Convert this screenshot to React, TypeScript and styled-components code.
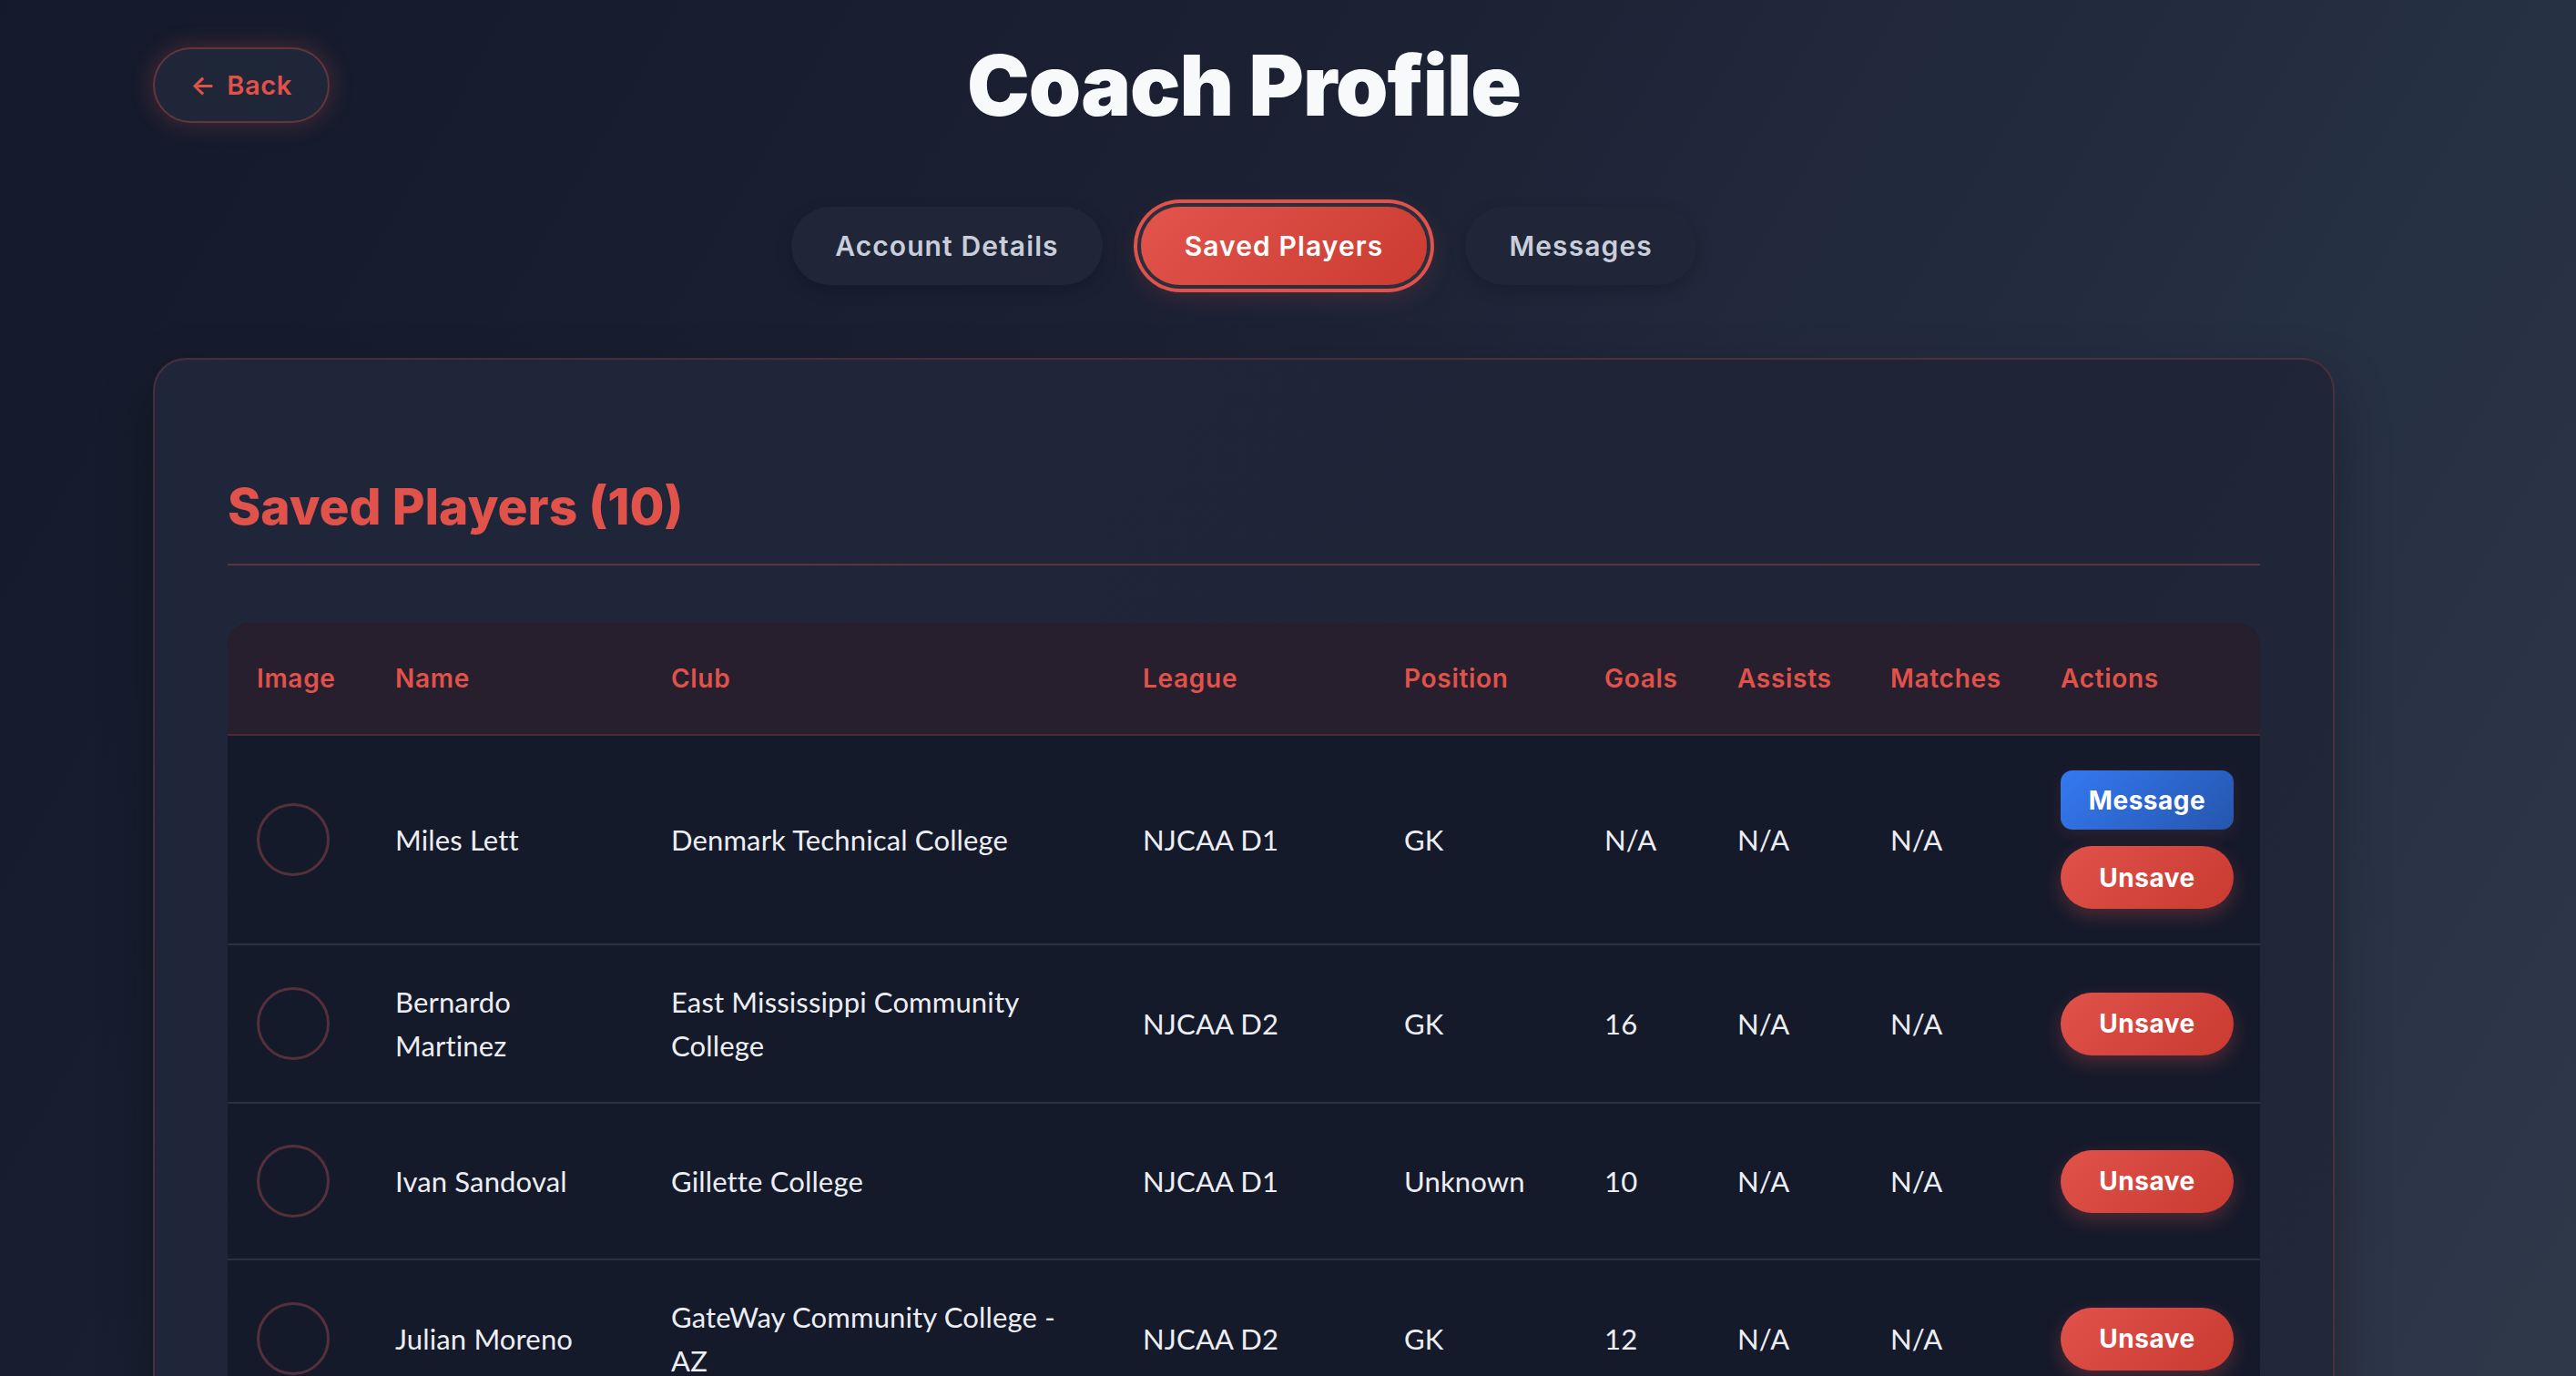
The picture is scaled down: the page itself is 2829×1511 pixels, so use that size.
import React from "react";
import styled, { createGlobalStyle } from "styled-components";

const GlobalStyle = createGlobalStyle`
  html, body {
    margin: 0;
    padding: 0;
  }
  body {
    min-height: 100vh;
    background: linear-gradient(120deg, #141a2b 0%, #1b2133 40%, #263043 75%, #2f3849 100%);
    background-attachment: fixed;
    font-family: "Lato", "Noto Sans", sans-serif;
    color: #e9ecf2;
  }
  #root {
    min-height: 100vh;
  }
`;

const Page = styled.div`
  width: 2396px;
  margin-left: 168px;
  padding-top: 52px;
  padding-bottom: 80px;
`;

const Header = styled.header`
  display: grid;
  grid-template-columns: 1fr auto 1fr;
  align-items: center;
  height: 83px;
`;

const BackButton = styled.button`
  justify-self: start;
  box-sizing: border-box;
  display: inline-flex;
  align-items: center;
  gap: 12px;
  height: 83px;
  padding: 0 39px;
  border-radius: 42px;
  border: 2px solid rgba(224, 82, 74, 0.35);
  background: #1f2637;
  color: #e0524a;
  font-family: "Inter", "Liberation Sans", sans-serif;
  font-size: 29px;
  font-weight: 600;
  letter-spacing: 0.6px;
  box-shadow: 0 0 26px rgba(224, 82, 74, 0.28);
  cursor: pointer;
`;

const Title = styled.h1`
  margin: 0;
  font-family: "Inter", "Liberation Sans", sans-serif;
  font-weight: 900;
  font-size: 92px;
  line-height: 83px;
  letter-spacing: -1px;
  color: #f8f9fb;
`;

const Tabs = styled.nav`
  display: flex;
  justify-content: center;
  gap: 42px;
  margin-top: 92px;
`;

const Tab = styled.button<{ $active?: boolean }>`
  box-sizing: border-box;
  height: 86px;
  padding: 0 48px;
  border-radius: 43px;
  border: none;
  font-family: "Inter", "Liberation Sans", sans-serif;
  font-size: 30px;
  font-weight: 600;
  letter-spacing: 1.1px;
  cursor: pointer;
  color: ${(p) => (p.$active ? "#ffffff" : "#c8cedb")};
  background: ${(p) =>
    p.$active ? "linear-gradient(135deg, #e2544c 0%, #cb3b32 100%)" : "#202637"};
  box-shadow: ${(p) =>
    p.$active
      ? "0 0 0 4px #2a2e3d, 0 0 0 8px #e0524a, 0 8px 30px rgba(224, 82, 74, 0.25)"
      : "0 6px 18px rgba(0, 0, 0, 0.18)"};
`;

const Card = styled.section`
  margin-top: 80px;
  padding: 128px 80px 80px;
  border-radius: 36px;
  border: 2px solid rgba(224, 82, 74, 0.22);
  background: linear-gradient(120deg, #20263a 0%, #1f2536 60%, #222a3b 100%);
  box-shadow: 0 24px 60px rgba(0, 0, 0, 0.3);
`;

const SectionTitle = styled.h2`
  margin: 0;
  padding-bottom: 30px;
  border-bottom: 2px solid rgba(224, 82, 74, 0.32);
  font-family: "Inter", "Liberation Sans", sans-serif;
  font-weight: 800;
  font-size: 55px;
  line-height: 66px;
  color: #e0524a;
`;

const TableWrap = styled.div`
  margin-top: 63px;
  border-radius: 25px;
  overflow: hidden;
  background: #151a2b;
`;

const Table = styled.table`
  width: 100%;
  border-collapse: collapse;
  table-layout: fixed;
`;

const HeadCell = styled.th`
  height: 122px;
  padding: 0 32px;
  text-align: left;
  background: #281f2e;
  border-bottom: 2px solid #4b2a35;
  color: #e0524a;
  font-family: "Inter", "Liberation Sans", sans-serif;
  font-size: 28px;
  font-weight: 600;
  letter-spacing: 0.7px;
`;

const Row = styled.tr`
  height: 172px;
  background: #151a2b;
  & + & td {
    border-top: 2px solid #2a3142;
  }
`;

const Cell = styled.td`
  padding: 38px 32px;
  vertical-align: middle;
  font-family: "Lato", "Noto Sans", sans-serif;
  font-size: 31px;
  line-height: 48px;
  letter-spacing: 0.15px;
  color: #eceef3;
`;

const Avatar = styled.div`
  width: 80px;
  height: 80px;
  border-radius: 50%;
  border: 3px solid #55303a;
  box-sizing: border-box;
`;

const Actions = styled.div`
  display: flex;
  flex-direction: column;
  gap: 18px;
  width: 190px;
`;

const ActionButton = styled.button<{ $variant: "message" | "unsave" }>`
  box-sizing: border-box;
  width: 100%;
  height: ${(p) => (p.$variant === "message" ? "65px" : "69px")};
  border: none;
  border-radius: ${(p) => (p.$variant === "message" ? "13px" : "35px")};
  color: #ffffff;
  font-family: "Inter", "Liberation Sans", sans-serif;
  font-size: 28px;
  font-weight: 700;
  letter-spacing: 0.5px;
  cursor: pointer;
  background: ${(p) =>
    p.$variant === "message"
      ? "linear-gradient(135deg, #3479f2 0%, #2556ad 100%)"
      : "linear-gradient(135deg, #e0524a 0%, #c93a31 100%)"};
  box-shadow: ${(p) =>
    p.$variant === "message"
      ? "0 6px 18px rgba(224, 82, 74, 0.12)"
      : "0 8px 20px rgba(224, 82, 74, 0.28)"};
`;

type Player = {
  name: string;
  club: string;
  league: string;
  position: string;
  goals: string;
  assists: string;
  matches: string;
  canMessage?: boolean;
};

const players: Player[] = [
  { name: "Miles Lett", club: "Denmark Technical College", league: "NJCAA D1", position: "GK", goals: "N/A", assists: "N/A", matches: "N/A", canMessage: true },
  { name: "Bernardo Martinez", club: "East Mississippi Community College", league: "NJCAA D2", position: "GK", goals: "16", assists: "N/A", matches: "N/A" },
  { name: "Ivan Sandoval", club: "Gillette College", league: "NJCAA D1", position: "Unknown", goals: "10", assists: "N/A", matches: "N/A" },
  { name: "Julian Moreno", club: "GateWay Community College - AZ", league: "NJCAA D2", position: "GK", goals: "12", assists: "N/A", matches: "N/A" },
  { name: "Diego Alvarez", club: "Iowa Western Community College", league: "NJCAA D1", position: "GK", goals: "8", assists: "N/A", matches: "N/A" },
  { name: "Samuel Okafor", club: "Tyler Junior College", league: "NJCAA D1", position: "GK", goals: "N/A", assists: "N/A", matches: "N/A" },
  { name: "Lucas Pereira", club: "Monroe College", league: "NJCAA D1", position: "GK", goals: "5", assists: "N/A", matches: "N/A" },
  { name: "Ethan Brooks", club: "Salt Lake Community College", league: "NJCAA D1", position: "Unknown", goals: "N/A", assists: "N/A", matches: "N/A" },
  { name: "Mateo Rossi", club: "Louisburg College", league: "NJCAA D2", position: "GK", goals: "3", assists: "N/A", matches: "N/A" },
  { name: "Noah Bennett", club: "Cowley College", league: "NJCAA D1", position: "GK", goals: "N/A", assists: "N/A", matches: "N/A" },
];

const columns = [
  { label: "Image", width: 152 },
  { label: "Name", width: 303 },
  { label: "Club", width: 518 },
  { label: "League", width: 287 },
  { label: "Position", width: 220 },
  { label: "Goals", width: 146 },
  { label: "Assists", width: 168 },
  { label: "Matches", width: 187 },
  { label: "Actions", width: 254 },
];

export default function App() {
  return (
    <>
      <GlobalStyle />
      <Page>
        <Header>
          <BackButton>
            <span>←</span>
            <span>Back</span>
          </BackButton>
          <Title>Coach Profile</Title>
          <div />
        </Header>

        <Tabs>
          <Tab>Account Details</Tab>
          <Tab $active>Saved Players</Tab>
          <Tab>Messages</Tab>
        </Tabs>

        <Card>
          <SectionTitle>Saved Players ({players.length})</SectionTitle>
          <TableWrap>
            <Table>
              <colgroup>
                {columns.map((c) => (
                  <col key={c.label} style={{ width: c.width }} />
                ))}
              </colgroup>
              <thead>
                <tr>
                  {columns.map((c) => (
                    <HeadCell key={c.label}>{c.label}</HeadCell>
                  ))}
                </tr>
              </thead>
              <tbody>
                {players.map((p) => (
                  <Row key={p.name}>
                    <Cell>
                      <Avatar />
                    </Cell>
                    <Cell>{p.name}</Cell>
                    <Cell>{p.club}</Cell>
                    <Cell>{p.league}</Cell>
                    <Cell>{p.position}</Cell>
                    <Cell>{p.goals}</Cell>
                    <Cell>{p.assists}</Cell>
                    <Cell>{p.matches}</Cell>
                    <Cell>
                      <Actions>
                        {p.canMessage && <ActionButton $variant="message">Message</ActionButton>}
                        <ActionButton $variant="unsave">Unsave</ActionButton>
                      </Actions>
                    </Cell>
                  </Row>
                ))}
              </tbody>
            </Table>
          </TableWrap>
        </Card>
      </Page>
    </>
  );
}
